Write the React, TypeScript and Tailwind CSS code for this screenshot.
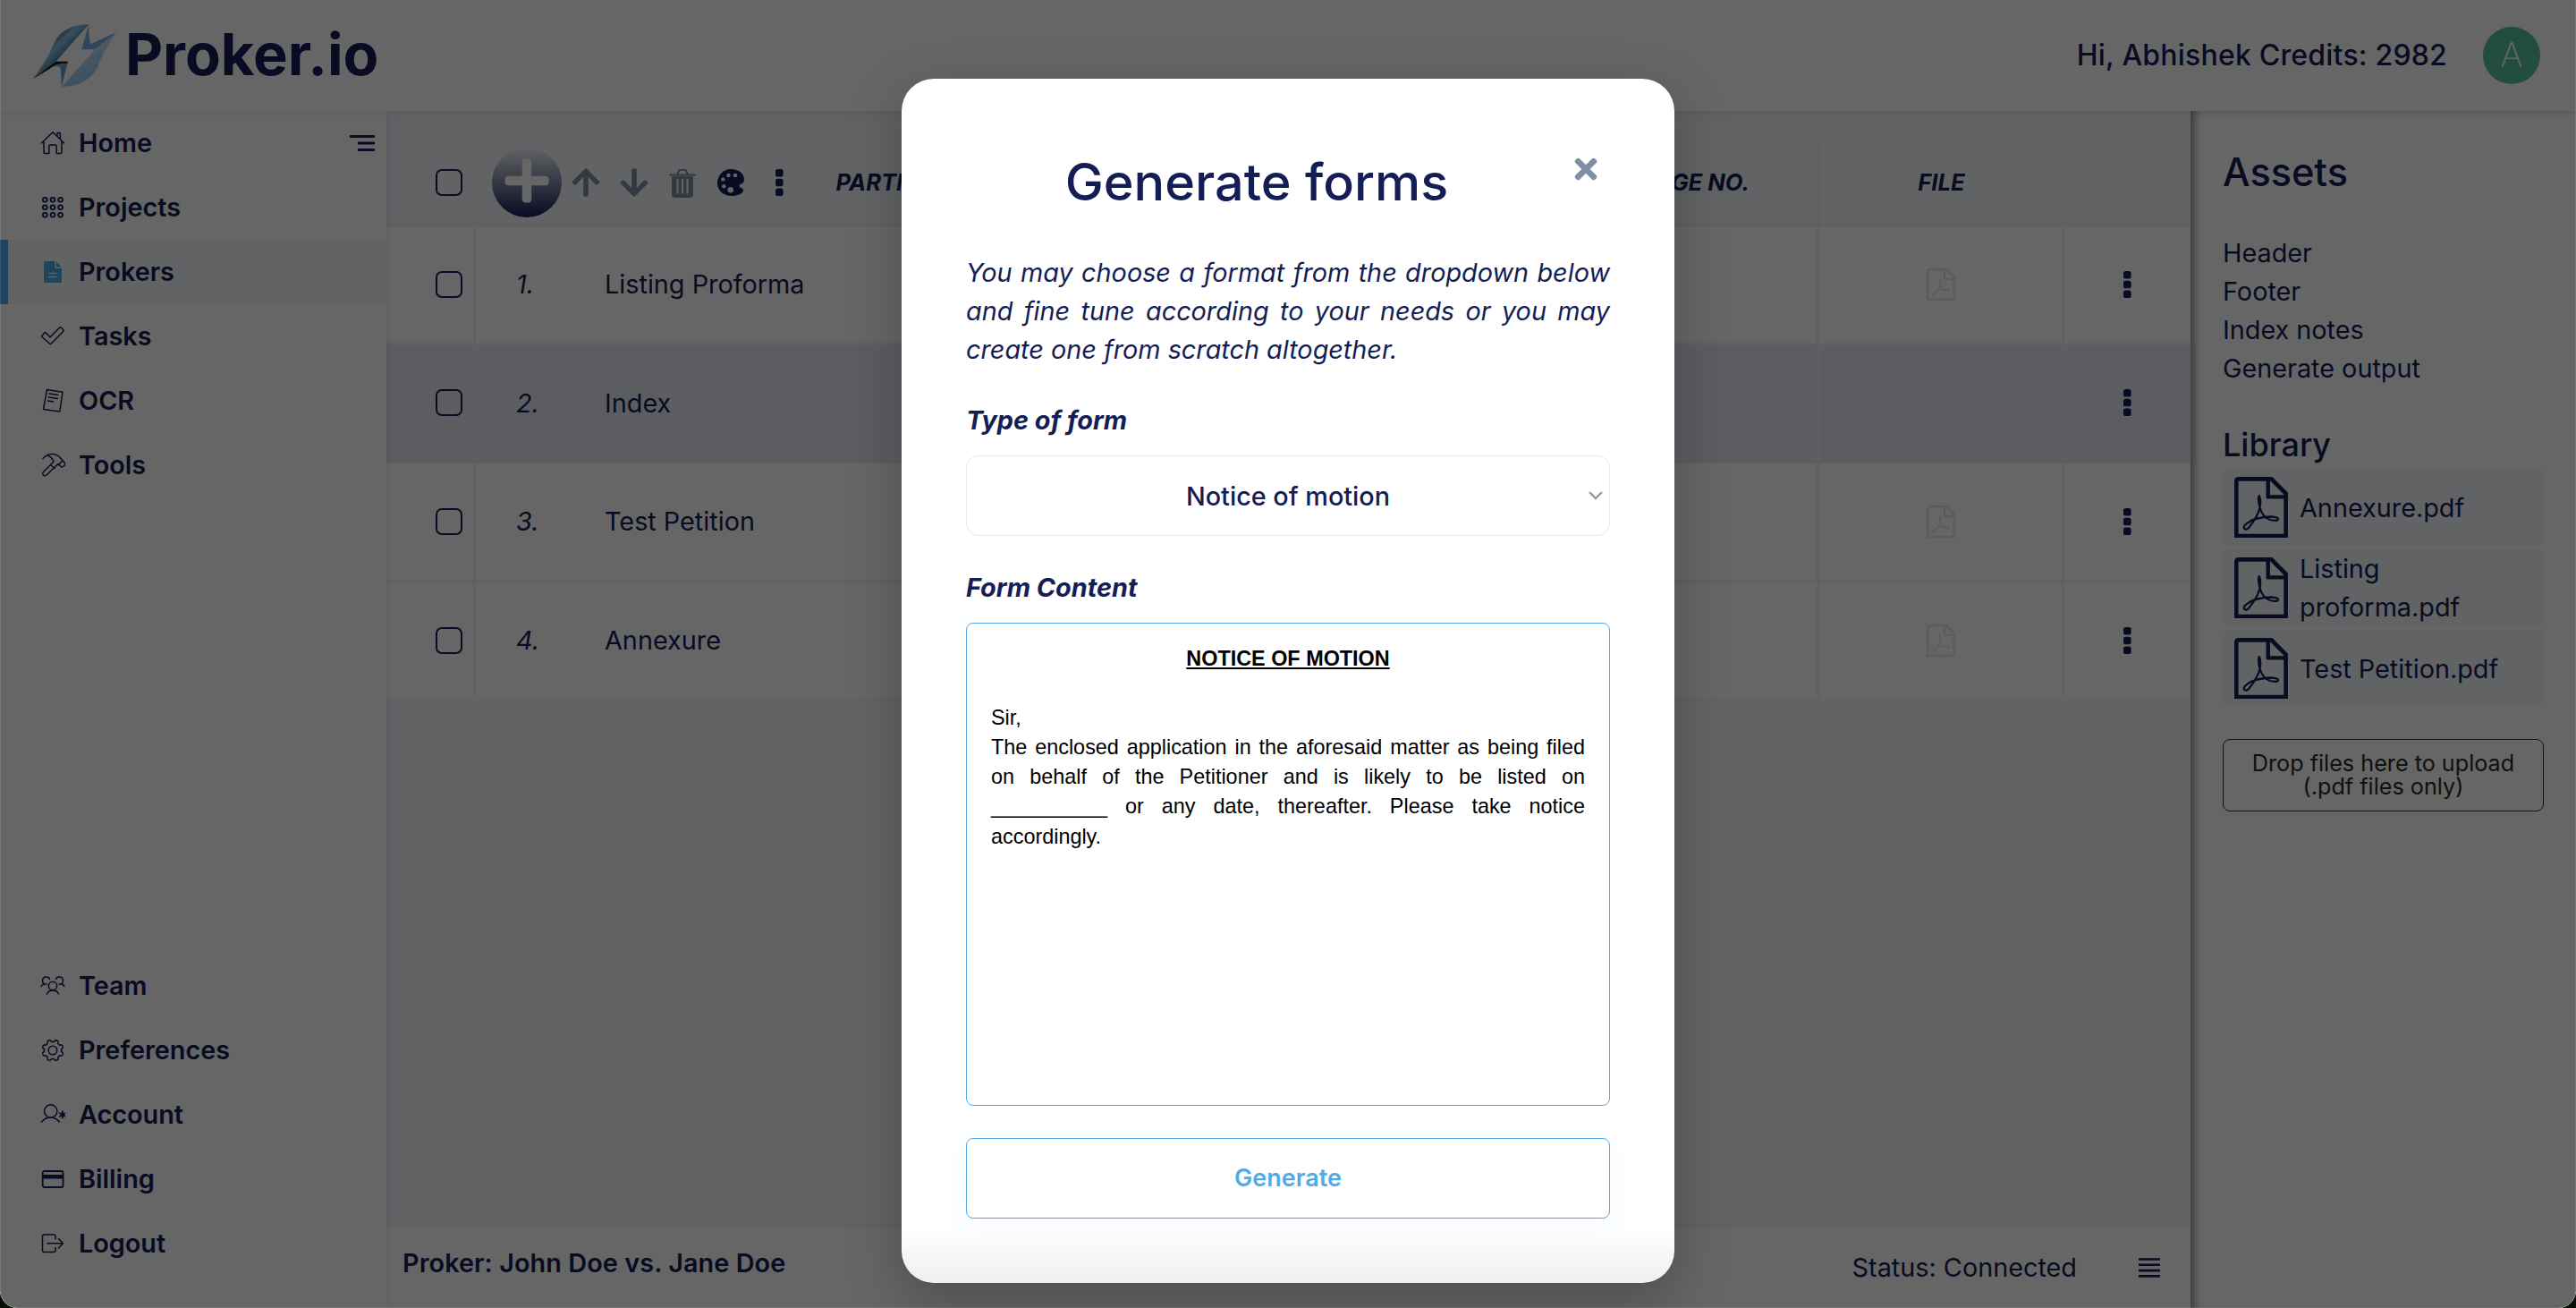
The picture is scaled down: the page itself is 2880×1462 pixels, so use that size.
import React from "react";
import { FaArrowUp, FaArrowDown, FaTimes, FaPlus } from "react-icons/fa";

const stroke = {
  fill: "none",
  stroke: "currentColor",
  strokeWidth: 1.5,
  strokeLinecap: "round" as const,
  strokeLinejoin: "round" as const,
};

const gearPoints = Array.from({ length: 128 }, (_, i) => {
  const a = (i / 128) * Math.PI * 2;
  const r = 10.7 + 1.2 * Math.tanh(2.5 * Math.cos(8 * a + Math.PI));
  return `${(14 + r * Math.cos(a)).toFixed(2)},${(14 + r * Math.sin(a)).toFixed(2)}`;
}).join(" ");

function NavSvg({ children }: { children: React.ReactNode }) {
  return (
    <svg viewBox="0 0 28 28" className="h-7 w-7 shrink-0" {...stroke}>
      {children}
    </svg>
  );
}

const icons = {
  home: (
    <NavSvg>
      <path d="M1.3 14 14 1.8 26.7 14M4 12v12.3q0 1.2 1.2 1.2h4.6v-8.300q0-1.200 1.200-1.200h6q1.200 0 1.200 1.200v8.300h4.600q1.200 0 1.200-1.200V12M19 6V2.500h3.300v7" />
    </NavSvg>
  ),
  projects: (
    <NavSvg>
      {[5.3, 13.8, 22.3].map((y) =>
        [5.3, 14, 22.6].map((x) => <circle key={`${x}-${y}`} cx={x} cy={y} r="2.400" strokeWidth="1.800" />),
      )}
    </NavSvg>
  ),
  prokers: (
    <svg viewBox="0 0 28 28" className="h-7 w-7 shrink-0 text-[#4fadeb]" fill="currentColor">
      <path d="M6 2h10.500v6.500q0 1.500 1.500 1.500h6v14.500q0 1.500-1.500 1.500h-17q-1.500 0-1.500-1.500v-21Q4 2 6 2z" />
      <path d="M18 2.500 23.500 8.500H18z" />
      <path d="M9.500 15.500h9M9.500 19.500h9" stroke="#f4f7fc" strokeWidth="1.500" />
    </svg>
  ),
  tasks: (
    <NavSvg>
      <path d="M2 13.300 4.800 10q.8-.8 1.600 0l4.600 5L21.500 4.300q1-1 2 0l2.300 2.400q.8.8 0 1.600L12.300 22q-1 1-2 0L2 14.500q-.6-.6 0-1.200z" />
    </NavSvg>
  ),
  ocr: (
    <NavSvg>
      <path d="M7.500 1.500 25 4.300 21.800 26 3.500 23.500zM10 6l10 1.500M9.300 10l10 1.500M8.600 14l6 .9" />
    </NavSvg>
  ),
  tools: (
    <NavSvg>
      <path d="M3 6.500Q8 1 14 1.500q6 .5 9.500 5.500l4 4.500q.5 2-1 3.300-1.500 1.500-3 1L20 12.500 7 25q-2 1.500-3.500 0-1.500-1.500 0-3.500L15 10q-1.500-4.500-6-6.500M11.500 13.500l4.500 4M20.500 13.500l4-4" />
    </NavSvg>
  ),
  team: (
    <NavSvg>
      <circle cx="14" cy="14" r="4.700" />
      <path d="M7.500 23q1.500-4 6.500-4t6.500 4M7 12H4.500q-2-1-2-4 0-4 4-4 3.500 0 4 2.500M1 14.500Q2 12.500 4.500 12M21 12h2.500q2-1 2-4 0-4-4-4-3.500 0-4 2.500M27 14.500q-1-2-3.500-2.500" />
    </NavSvg>
  ),
  preferences: (
    <NavSvg>
      <circle cx="14" cy="14" r="4.800" />
      <polygon points={gearPoints} />
    </NavSvg>
  ),
  account: (
    <NavSvg>
      <circle cx="11.700" cy="10" r="7.200" />
      <path d="M1.500 22q4-5 10-5t10 5" />
      <path d="M25 10.500v7M22 12.300l6 3.500M28 12.300l-6 3.500" strokeWidth="1.800" />
    </NavSvg>
  ),
  billing: (
    <NavSvg>
      <rect x="2.700" y="5" width="22.800" height="18" rx="2" strokeWidth="1.800" />
      <path d="M3 11.300h22" strokeWidth="4.500" strokeLinecap="butt" />
    </NavSvg>
  ),
  logout: (
    <NavSvg>
      <path d="M17 9V6q0-2-2-2H4.500q-2 0-2 2v15.500q0 2 2 2H15q2 0 2-2v-3M8 13.800h17.500M20.500 8.500l5 5.300-5 5.300" />
    </NavSvg>
  ),
};

function Logo() {
  return (
    <svg viewBox="105 72 290 222" className="h-[74px] w-[97px] shrink-0">
      <defs>
        <linearGradient id="wing" x1="0" y1="0" x2="1" y2="1">
          <stop offset="0.250" stopColor="#2d4352" />
          <stop offset="0.420" stopColor="#8fc4e8" />
          <stop offset="0.560" stopColor="#4f7a98" />
          <stop offset="0.660" stopColor="#0a0d10" />
        </linearGradient>
        <linearGradient id="leaf" x1="0" y1="0" x2="0.700" y2="1">
          <stop offset="0" stopColor="#8fc8f0" />
          <stop offset="0.500" stopColor="#b8defa" />
          <stop offset="1" stopColor="#7ab8ea" />
        </linearGradient>
      </defs>
      <path d="M297 79C255 78 215 92 190 125C170 165 150 210 110 262L187 203Z" fill="url(#wing)" />
      <path d="M110 262 187 203H228L206 288 203 225Q195 215 175 222Z" fill="#6b9fc4" />
      <path d="M110 262 187 203H228L222 210Q190 206 165 228Z" fill="#11181e" />
      <path d="M297 79 273 163H318L390 105 305 144Q298 140 297 79Z" fill="#74b0e6" />
      <path d="M390 105 318 163 206 288C265 288 305 262 325 225Q345 170 390 105Z" fill="url(#leaf)" />
    </svg>
  );
}

function NavItem({ icon, label, active, children }: { icon: React.ReactNode; label: string; active?: boolean; children?: React.ReactNode }) {
  return (
    <div
      className={`flex h-[72px] items-center border-l-[9px] pr-[13px] pl-9 text-[28.8px] font-semibold ${
        active ? "border-[#4fadeb] bg-[#f4f7fc]" : "border-transparent"
      }`}
    >
      {icon}
      <span className="ml-[15px] flex-1">{label}</span>
      {children}
    </div>
  );
}

function Checkbox() {
  return <div className="h-[30px] w-[30px] rounded-[7px] border-[2.500px] border-[#141d55]" />;
}

function TrashIcon() {
  return (
    <svg viewBox="0 0 30 33" className="h-[33px] w-[30px]">
      <path d="M1 7.500h28M9 7 11.500 2h7L21 7" fill="none" stroke="currentColor" strokeWidth="2.200" strokeLinecap="round" strokeLinejoin="round" />
      <path fillRule="evenodd" fill="currentColor" d="M3 9h24v20q0 4-4 4H7q-4 0-4-4zM8.500 12v16.500h2V12zm5.500 0v16.500h2V12zm5.500 0v16.500h2V12z" />
    </svg>
  );
}

function PaletteIcon() {
  return (
    <svg viewBox="0 0 30 30" className="h-[30px] w-[30px] text-[#141d55]">
      <path
        fill="currentColor"
        d="M15 0C24 0 30 5 30 11.500c0 3-1.500 4.500-3.200 5-2.300.7-3 2-1.800 3.500 1 1 3.500 1.500 4.200 2.700C29.500 27 23 30 16 30 6.500 30 0 23.500 0 15.500S6.500 0 15 0z"
      />
      <g className="text-[#f4f7fc]" fill="currentColor">
        <circle cx="6.300" cy="11.500" r="2.300" />
        <circle cx="12.500" cy="7" r="2.300" />
        <circle cx="20" cy="7" r="2.300" />
        <circle cx="7.300" cy="19.300" r="2.300" />
        <circle cx="14.700" cy="23.300" r="3.300" />
      </g>
    </svg>
  );
}

function Ellipsis() {
  return (
    <svg viewBox="0 0 8.600 30" className="h-[30px] w-[8.600px]" fill="currentColor">
      <rect width="8.600" height="8.600" rx="2.600" />
      <rect y="10.700" width="8.600" height="8.600" rx="2.600" />
      <rect y="21.400" width="8.600" height="8.600" rx="2.600" />
    </svg>
  );
}

function PdfIcon({ className }: { className: string }) {
  return (
    <svg viewBox="0 0 60 68" className={className} fill="none" stroke="currentColor" strokeLinejoin="round">
      <path d="M2.300 66V5q0-2.600 2.600-2.600h36.600L57.600 18.500V66z" strokeWidth="4.600" strokeLinejoin="miter" />
      <path d="M37.700 2.400v20h20" strokeWidth="4.400" />
      <path
        d="M27.800 21q2.400 5 .6 14-2.400 9.500-12 21.500-3 3.500-5 1.500t2-5.500Q21 45.500 40 44.500q9.500.2 9 2.800-.8 2.600-9 .7-8-2.500-11.500-13.500-2.600-10-.7-13.500z"
        strokeWidth="2.300"
      />
    </svg>
  );
}

const rows = [
  { n: "1.", label: "Listing Proforma", file: true, cls: "h-[132.600px] border-b-[3px] bg-white border-[#f0f0f0]" },
  { n: "2.", label: "Index", file: false, cls: "h-[132.600px] border-b-[3px] bg-[#e6e9f3] border-[#ebebee]" },
  { n: "3.", label: "Test Petition", file: true, cls: "h-[132.600px] border-b-[3px] bg-white border-[#f0f0f0]" },
  { n: "4.", label: "Annexure", file: true, cls: "h-[129.600px] bg-white" },
];

const grid = "grid grid-cols-[100px_1502px_274px_1fr]";

export default function App() {
  return (
    <div className="relative h-[1462px] w-[2880px] overflow-hidden bg-[#0a0f05] font-['Inter',sans-serif] text-[28.8px] leading-[43.200px] text-[#141d55]">
      <div className="flex h-full w-full flex-col overflow-hidden rounded-b-[20px] bg-white">
        <header className="relative z-10 flex h-[124px] shrink-0 items-center bg-white pl-[35px] pr-10 shadow-[0_2px_14px_rgba(20,29,82,0.100)]">
          <Logo />
          <span className="ml-[8px] mt-[-3px] text-[65px] leading-none font-bold">Proker.io</span>
          <span className="ml-auto text-[32px] font-medium tracking-[0.200px]">Hi, Abhishek Credits: 2982</span>
          <div className="ml-10 flex h-16 w-16 items-center justify-center rounded-full bg-[#57c0a2] text-[38px] font-extralight text-white">A</div>
        </header>

        <div className="flex min-h-0 flex-1">
          <aside className="relative z-[1] flex w-[432px] flex-col justify-between bg-white pb-9 shadow-[2px_0_10px_rgba(20,29,82,0.080)]">
            <nav>
              <NavItem icon={icons.home} label="Home">
                <svg viewBox="0 0 28 18" className="h-[18px] w-7" stroke="currentColor" strokeWidth="2.800">
                  <path d="M0 1.500h28M9 9h19M9 16.500h19" />
                </svg>
              </NavItem>
              <NavItem icon={icons.projects} label="Projects" />
              <NavItem icon={icons.prokers} label="Prokers" active />
              <NavItem icon={icons.tasks} label="Tasks" />
              <NavItem icon={icons.ocr} label="OCR" />
              <NavItem icon={icons.tools} label="Tools" />
            </nav>
            <nav>
              <NavItem icon={icons.team} label="Team" />
              <NavItem icon={icons.preferences} label="Preferences" />
              <NavItem icon={icons.account} label="Account" />
              <NavItem icon={icons.billing} label="Billing" />
              <NavItem icon={icons.logout} label="Logout" />
            </nav>
          </aside>

          <main className="flex w-[2017px] flex-col bg-[#f4f7fc] pt-9">
            <div className={`${grid} h-[93px] border-b-[3px] border-[#f0f0f0]`}>
              <div className="flex items-center border-r-[3px] border-[#f0f0f0] pl-[55px] pb-[2px]">
                <Checkbox />
              </div>
              <div className="flex items-center border-r-[3px] border-[#f0f0f0] pb-[2px] pl-[18px]">
                <div className="flex h-[78px] w-[78px] items-center justify-center rounded-full bg-linear-to-b from-[#141d55]/0 to-[#141d55] text-white">
                  <FaPlus className="mt-[-4px] h-[56px] w-[56px]" />
                </div>
                <FaArrowUp className="ml-[9px] h-9 w-9 text-[#7f8fa4]" />
                <FaArrowDown className="ml-[18px] h-9 w-9 text-[#7f8fa4]" />
                <div className="ml-[21px] text-[#7f8fa4]">
                  <TrashIcon />
                </div>
                <div className="ml-[24px]">
                  <PaletteIcon />
                </div>
                <div className="ml-[35px]">
                  <Ellipsis />
                </div>
                <span className="ml-[59px] text-[25.6px] font-bold italic">PARTICULARS</span>
                <span className="ml-auto mr-[75px] text-[25.6px] font-bold italic">PAGE NO.</span>
              </div>
              <div className="flex items-center justify-center border-r-[3px] border-[#f0f0f0] pb-[2px] pl-[2px] text-[25.6px] font-bold italic">
                FILE
              </div>
              <div />
            </div>
            {rows.map((r) => (
              <div key={r.n} className={`${grid} shrink-0 ${r.cls}`}>
                <div className="flex items-center border-r-[3px] border-[#f0f0f0] pl-[55px]">
                  <Checkbox />
                </div>
                <div className="flex items-center border-r-[3px] border-[#f0f0f0] pl-[45px]">
                  <span className="w-[99px] italic">{r.n}</span>
                  <span>{r.label}</span>
                </div>
                <div className="flex items-center justify-center border-r-[3px] border-[#f0f0f0]">
                  {r.file && <PdfIcon className="h-9 w-8 text-[#e4e5ef]" />}
                </div>
                <div className="flex items-center pl-[66px]">
                  <Ellipsis />
                </div>
              </div>
            ))}
            <footer className="mt-auto flex h-[91px] items-center border-t border-[#e6ecf5] bg-white pr-[34px] pl-[18px]">
              <span className="mt-[-10px] font-semibold tracking-[0.080px]">Proker: John Doe vs. Jane Doe</span>
              <span className="ml-auto">Status: Connected</span>
              <svg viewBox="0 0 24 22" className="ml-[69px] h-[22px] w-6" stroke="currentColor" strokeWidth="2.600">
                <path d="M0 1.500h24M0 7.800h24M0 14.100h24M0 20.400h24" />
              </svg>
            </footer>
          </main>

          <aside className="flex flex-1 flex-col bg-white pr-9 pl-9 shadow-[inset_9px_0_9px_-4px_rgba(0,0,0,0.400)]">
            <h2 className="mt-[36px] text-[43.200px] leading-[65px] font-medium">Assets</h2>
            <div className="mt-[36px] leading-[43px]">
              <p>Header</p>
              <p>Footer</p>
              <p>Index notes</p>
              <p>Generate output</p>
            </div>
            <h3 className="mt-[37px] text-[36px] leading-[54px] font-medium">Library</h3>
            <div className="flex flex-col gap-1">
              {["Annexure.pdf", "Listing proforma.pdf", "Test Petition.pdf"].map((f) => (
                <div key={f} className="flex h-[86px] items-center rounded-lg bg-[#f4f7fc] pl-[13px]">
                  <PdfIcon className="h-[68px] w-[60px] shrink-0" />
                  <span className="ml-[13px] w-[230px] leading-[43px]">{f}</span>
                </div>
              ))}
            </div>
            <div className="mt-9 h-[81px] rounded-lg border border-[#333] pt-[13px] text-center text-[25.200px] leading-[26px] text-[#2a2a2a]">
              Drop files here to upload
              <br />
              (.pdf files only)
            </div>
          </aside>
        </div>
      </div>

      <div className="absolute inset-0 z-20 flex justify-center rounded-b-[20px] border-x border-b border-white/10 bg-black/60">
        <section className="mt-[88px] flex h-[1346px] w-[864px] flex-col rounded-[36px] bg-[linear-gradient(to_bottom,#fff_1285px,#eee_1346px)] px-[72px] shadow-[0_20px_60px_rgba(0,0,0,0.250)]">
          <div className="mt-[72px] flex items-start">
            <h1 className="flex-1 pr-[25px] text-center text-[57.600px] leading-[86px] font-medium">Generate forms</h1>
            <FaTimes className="mt-[11px] mr-[9px] h-9 w-9 text-[#7f8fa4]" />
          </div>
          <p className="mt-[36.500px] text-justify italic">
            You may choose a format from the dropdown below and fine tune according to your needs or you may create one from scratch altogether.
          </p>
          <p className="mt-[35.500px] font-bold italic">Type of form</p>
          <div className="relative mt-[18px] flex h-[90px] shrink-0 items-center justify-center rounded-[14px] border border-[#e6e7f2] bg-white pt-px font-medium">
            Notice of motion
            <svg viewBox="0 0 16 10" className="absolute right-[7px] h-[10px] w-4" fill="none" stroke="#999" strokeWidth="2.400">
              <path d="M1 1l7 7 7-7" />
            </svg>
          </div>
          <p className="mt-[36px] font-bold italic">Form Content</p>
          <div className="mt-[18px] h-[540px] shrink-0 rounded-lg border border-[#4fabe8] bg-white px-[27px] pt-[22.500px] text-justify font-['Liberation_Sans',sans-serif] text-[23.400px] leading-[33.200px] text-black">
            <p className="text-center font-bold underline">NOTICE OF MOTION</p>
            <p className="mt-[33px]">Sir,</p>
            <p>
              The enclosed application in the aforesaid matter as being filed on behalf of the Petitioner and is likely to be listed on __________ or any date, thereafter. Please take notice accordingly.
            </p>
          </div>
          <button className="mt-9 h-[90px] shrink-0 rounded-lg border border-[#4fabe8] bg-white text-[27px] font-semibold text-[#4fabe8] shadow-[0_8px_32px_rgba(79,140,232,0.060)]">
            Generate
          </button>
        </section>
      </div>
    </div>
  );
}
